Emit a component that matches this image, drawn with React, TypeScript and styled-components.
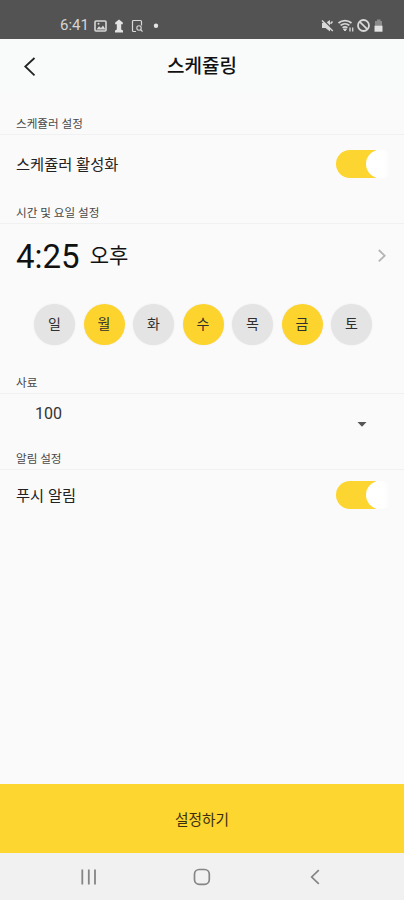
import React from "react";
import styled, { createGlobalStyle } from "styled-components";

const GlobalStyle = createGlobalStyle`
  * { box-sizing: border-box; }
  body { margin: 0; background: #fafafa; }
  button { border: 0; padding: 0; background: none; font: inherit; color: inherit; }
`;

const Screen = styled.div`
  width: 404px;
  height: 900px;
  display: flex;
  flex-direction: column;
  overflow: hidden;
  background: #fafafa;
  color: #252525;
  font-family: Roboto, "Noto Sans CJK KR", sans-serif;
`;

const StatusBar = styled.div`
  height: 39px;
  flex: none;
  display: flex;
  justify-content: space-between;
  padding: 12px 20px 0 60px;
  background: #535353;
  color: #dedede;
`;

const StatusGroup = styled.div`
  height: 27px;
  display: flex;
  align-items: center;
  svg { display: block; }
`;

const Clock = styled.span`
  width: 34px;
  font-size: 15px;
  line-height: 27px;
  color: #d5d5d5;
  white-space: nowrap;
`;

const Header = styled.header`
  height: 55px;
  flex: none;
  display: grid;
  grid-template-columns: 60px 1fr 60px;
  align-items: center;
  background: #f9fbfa;
`;

const BackButton = styled.button`
  height: 55px;
  padding-left: 23px;
  display: flex;
  align-items: center;
`;

const Title = styled.h1`
  margin: 0;
  text-align: center;
  font-size: 19px;
  line-height: 55px;
  height: 55px;
  font-weight: 500;
  color: #111;
`;

const SectionLabel = styled.h2<{ $height: number }>`
  margin: 0;
  flex: none;
  height: ${(p) => p.$height}px;
  padding: 0 16px 1px;
  display: flex;
  align-items: flex-end;
  font-size: 11.6px;
  line-height: 18px;
  font-weight: 400;
  color: #484848;
  border-bottom: 1px solid #f0f2f1;
`;

const Row = styled.div<{ $height: number }>`
  flex: none;
  height: ${(p) => p.$height}px;
  padding: 0 16px;
  display: flex;
  align-items: center;
  justify-content: space-between;
`;

const RowText = styled.span`
  font-size: 15.3px;
  line-height: 24px;
  color: #222;
`;

const Track = styled.button`
  width: 52px;
  height: 28px;
  margin-bottom: 2px;
  display: flex;
  justify-content: flex-end;
  border-radius: 14px;
  background: linear-gradient(90deg, #fdd531 0 40px, transparent 40px);
`;

const Thumb = styled.span`
  width: 28px;
  height: 28px;
  margin-right: -6px;
  border-radius: 50%;
  background: linear-gradient(90deg, #fff 0 17px, #fafafa 24px);
`;

const Time = styled.div`
  display: flex;
  align-items: center;
  gap: 10px;
  padding-top: 2px;
  color: #111;
`;

const Digits = styled.span`
  font-size: 33px;
  line-height: 40px;
`;

const Meridiem = styled.span`
  font-size: 21px;
  line-height: 30px;
  margin-bottom: 3px;
`;

const Days = styled.div`
  flex: none;
  height: 57px;
  padding: 16px 32px 0 34px;
  display: flex;
  justify-content: space-between;
`;

const Day = styled.button<{ $on: boolean }>`
  width: 41px;
  height: 41px;
  border-radius: 50%;
  background: ${(p) => (p.$on ? "#fdd42d" : "#e4e4e4")};
  box-shadow: 0 0 2px rgba(0, 0, 0, 0.08);
  font-size: 14px;
  line-height: 41px;
  text-align: center;
  color: #303030;
`;

const Select = styled.div`
  flex: none;
  height: 52px;
  padding: 10px 37px 0 35px;
  display: flex;
  justify-content: space-between;
  font-size: 16px;
  line-height: 20px;
  color: #333;
  svg { margin-top: 18px; }
`;

const Submit = styled.button`
  flex: none;
  height: 69px;
  margin-top: auto;
  background: #fdd62f;
  font-size: 14.7px;
  color: #3a3010;
`;

const NavBar = styled.nav`
  flex: none;
  height: 47px;
  display: grid;
  grid-template-columns: 145px 113px 113px;
  background: #f1f1f1;
  color: #858585;
`;

const NavButton = styled.button<{ $inset: number }>`
  padding-left: ${(p) => p.$inset}px;
  display: flex;
  align-items: center;
`;

const DAYS: [string, boolean][] = [
  ["일", false], ["월", true], ["화", false], ["수", true],
  ["목", false], ["금", true], ["토", false],
];

const NotificationIcons = () => (
  <svg width="68" height="16" viewBox="0 0 68 16" fill="none" stroke="#d8d8d8">
    <rect x="1" y="3" width="11" height="10" rx="1" strokeWidth="1.6" />
    <path d="M2.5 11.5 5 8.3l2 1.8 2-2.6 2.5 4z" fill="#d8d8d8" stroke="none" />
    <circle cx="4.5" cy="5.8" r="1" fill="#d8d8d8" stroke="none" />
    <path d="M22.8 3.2 25 1.6l2.2 1.6 1.6 1.3v1.8h-1.6v5.2l1.8 1v1.9h-8v-1.9l1.8-1V6.3h-1.6V4.5z" fill="#e2e2e2" stroke="none" />
    <path d="M42 13.5h-2.5a1 1 0 0 1-1-1v-9a1 1 0 0 1 1-1h7a1 1 0 0 1 1 1v4" strokeWidth="1.2" />
    <circle cx="45" cy="10" r="2.2" strokeWidth="1.1" />
    <path d="m46.5 11.5 2 2.2" strokeWidth="1.2" />
    <circle cx="62" cy="7.8" r="2.2" fill="#e5e5e5" stroke="none" />
  </svg>
);

const SystemIcons = () => (
  <svg width="64" height="18" viewBox="0 0 64 18" fill="none" stroke="#d8d8d8">
    <path d="M2 6h3.5L10 3v11.5L5.5 11H2z" fill="#d8d8d8" stroke="none" />
    <path d="m3 2.5 11 11" stroke="#535353" strokeWidth="1.5" />
    <path d="m2 3.5 10.8 10.5M10.5 6.8l2-2.3" strokeWidth="1.5" />
    <path d="M18.5 6a10 10 0 0 1 13 0M20.6 8.4a7 7 0 0 1 8.8 0M22.6 10.7a4 4 0 0 1 4.8 0" strokeWidth="1.8" />
    <path d="m23.5 12 1.5 2 1.5-2z" fill="#d8d8d8" />
    <path d="M30 10.5v4M32.7 10.5v4" strokeWidth="1.3" />
    <circle cx="43.5" cy="8.5" r="5.5" strokeWidth="1.8" />
    <path d="m39.8 4.8 7.4 7.4" strokeWidth="1.8" />
    <path d="M57 2.5h3.5V4H62v5.5h-7V4h2z" fill="#8b8b8b" stroke="none" />
    <path d="M54.5 8.7h8v6h-8z" fill="#e2e2e2" stroke="none" />
  </svg>
);

const Toggle = () => (
  <Track role="switch" aria-checked="true">
    <Thumb />
  </Track>
);

export default function App() {
  return (
    <Screen>
      <GlobalStyle />
      <StatusBar>
        <StatusGroup>
          <Clock>6:41</Clock>
          <NotificationIcons />
        </StatusGroup>
        <StatusGroup>
          <SystemIcons />
        </StatusGroup>
      </StatusBar>
      <Header>
        <BackButton aria-label="뒤로">
          <svg width="14" height="20" viewBox="0 0 14 20" fill="none" stroke="#222" strokeWidth="1.8">
            <path d="M11.5 1 2.3 9.5l9.2 8.8" />
          </svg>
        </BackButton>
        <Title>스케쥴링</Title>
      </Header>
      <SectionLabel $height={41}>스케쥴러 설정</SectionLabel>
      <Row $height={59}>
        <RowText>스케쥴러 활성화</RowText>
        <Toggle />
      </Row>
      <SectionLabel $height={30}>시간 및 요일 설정</SectionLabel>
      <Row $height={64}>
        <Time>
          <Digits>4:25</Digits>
          <Meridiem>오후</Meridiem>
        </Time>
        <svg width="11" height="15" viewBox="0 0 11 15" fill="none" stroke="#b5b5b5" strokeWidth="1.8">
          <path d="m1.8 1 5.9 5.7-5.9 5.7" />
        </svg>
      </Row>
      <Days>
        {DAYS.map(([name, on]) => (
          <Day key={name} $on={on}>{name}</Day>
        ))}
      </Days>
      <SectionLabel $height={49}>사료</SectionLabel>
      <Select>
        <span>100</span>
        <svg width="10" height="6" viewBox="0 0 10 6" fill="#555">
          <path d="M.5 0h9L5 4.7z" />
        </svg>
      </Select>
      <SectionLabel $height={24}>알림 설정</SectionLabel>
      <Row $height={51}>
        <RowText>푸시 알림</RowText>
        <Toggle />
      </Row>
      <Submit>설정하기</Submit>
      <NavBar>
        <NavButton $inset={80} aria-label="최근 앱">
          <svg width="18" height="18" viewBox="0 0 18 18" stroke="currentColor" strokeWidth="1.8">
            <path d="M2.3 1.5v15M8.8 1.5v15M15 1.5v15" />
          </svg>
        </NavButton>
        <NavButton $inset={48} aria-label="홈">
          <svg width="18" height="18" viewBox="0 0 18 18" fill="none" stroke="currentColor" strokeWidth="1.7">
            <rect x="1.5" y="1.5" width="14.8" height="14.8" rx="4.8" />
          </svg>
        </NavButton>
        <NavButton $inset={51} aria-label="뒤로 가기">
          <svg width="12" height="18" viewBox="0 0 12 18" fill="none" stroke="currentColor" strokeWidth="1.7">
            <path d="M9.8 2.2 2.7 9l7.1 6.8" />
          </svg>
        </NavButton>
      </NavBar>
    </Screen>
  );
}
